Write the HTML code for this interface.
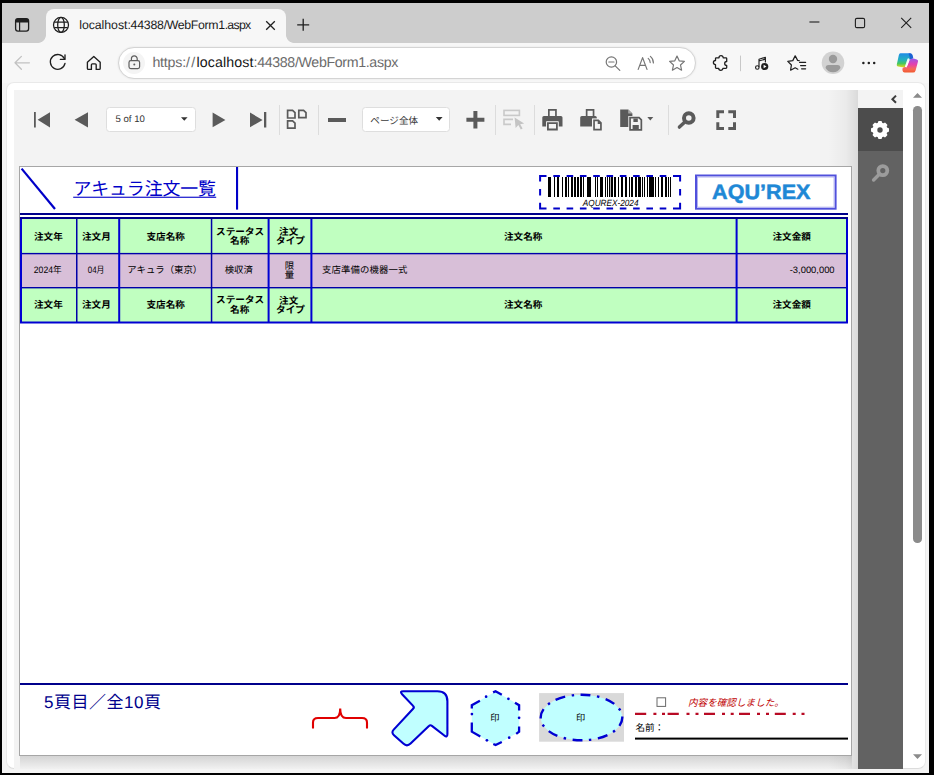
<!DOCTYPE html>
<html lang="ja"><head><meta charset="utf-8"><title>localhost:44388/WebForm1.aspx</title>
<style>

*{box-sizing:border-box}
html,body{margin:0;padding:0}
body{width:934px;height:775px;background:#000;position:relative;overflow:hidden;font-family:"Liberation Sans",sans-serif;color:#1b1b1b;text-rendering:geometricPrecision;-webkit-font-smoothing:antialiased}
.abs{position:absolute}
svg{position:absolute;overflow:visible}
#win{left:2px;top:3px;width:927px;height:770px;background:#f4f4f4}
#tabstrip{left:2px;top:3px;width:927px;height:40px;background:#cdcdcd}
#tab{left:46px;top:9px;width:240px;height:34px;background:#f7f7f7;border-radius:8px 8px 0 0}
#tab:before,#tab:after{content:"";position:absolute;bottom:0;width:8px;height:8px}
#tab:before{left:-8px;background:radial-gradient(circle at 0 0,rgba(247,247,247,0) 7.5px,#f7f7f7 8.2px)}
#tab:after{right:-8px;background:radial-gradient(circle at 100% 0,rgba(247,247,247,0) 7.5px,#f7f7f7 8.2px)}
#tabtitle{left:79.2px;top:17.8px;font-size:12.3px;line-height:15px;white-space:nowrap;color:#1a1a1a}
#toolbar{left:2px;top:43px;width:927px;height:40px;background:#f7f7f7}
#pill{left:118px;top:47px;width:578px;height:32px;background:#fff;border:1px solid #d4d4d4;border-radius:16px;box-shadow:0 0 2px rgba(0,0,0,.10)}
#lockbg{left:123px;top:52px;width:22px;height:22px;border-radius:11px;background:#f4f4f4}
#url{left:152.4px;top:55.4px;font-size:14.2px;line-height:17px;white-space:nowrap;color:#6b6b6b}
#url .k{color:#141414}
#content{left:6px;top:82px;width:920px;height:687px;background:#fff;border-radius:8px;border:1px solid #e9e9e9;border-bottom-color:#dcdcdc}
#viewer{left:14px;top:90px;width:889px;height:679px;background:#f3f3f3}
#pshadow{left:20px;top:755px;width:832px;height:14px;background:linear-gradient(#d2d2d2,#f1f1f1)}
#sshadow{left:828px;top:90px;width:30px;height:679px;background:linear-gradient(90deg,rgba(0,0,0,0),rgba(0,0,0,.035) 60%,rgba(0,0,0,.10))}
#side{left:858px;top:90px;width:45px;height:679px;background:#626262}
#sidetop{left:858px;top:90px;width:45px;height:18px;background:#f3f3f3}
#sideact{left:858px;top:108px;width:45px;height:42.5px;background:#4c4c4c}
#thumb{left:913.2px;top:106px;width:8.6px;height:436.6px;border-radius:4.3px;background:#8b8b8b}
.dd{height:25px;top:107px;background:#fff;border:1px solid #dedede;border-radius:3.5px}
.sep{top:104.5px;width:1px;height:30.5px;background:#dcdcdc}
#pgtxt{left:115.6px;top:114px;font-size:9.6px;line-height:11px;letter-spacing:-0.023px;color:#333;white-space:nowrap}
.jt{font-family:"Liberation Sans","Noto Sans CJK JP",sans-serif}
.hd{font-family:"Liberation Sans","Noto Sans CJK JP",sans-serif;font-size:9.6px;font-weight:700;fill:#000;text-anchor:middle}
.dt{font-family:"Liberation Sans","Noto Sans CJK JP",sans-serif;font-size:9.4px;fill:#000}

</style></head>
<body>

<div id="win" class="abs"></div>
<div id="tabstrip" class="abs"></div>
<div id="tab" class="abs"></div>
<div id="tabtitle" class="abs"><span style="letter-spacing:-0.039px">localhost</span><span style="letter-spacing:-0.220px">:44388</span><span style="letter-spacing:-0.336px">/WebForm1</span><span style="letter-spacing:-0.700px">.aspx</span></div>
<div id="toolbar" class="abs"></div>
<div id="pill" class="abs"></div>
<div id="lockbg" class="abs"></div>
<div id="url" class="abs"><span style="letter-spacing:-0.188px">https:</span><span style="letter-spacing:1.255px">//</span><span class="k" style="letter-spacing:0.128px">localhost</span><span style="letter-spacing:-0.334px">:44388/WebForm1.aspx</span></div>
<div id="content" class="abs"></div>
<div id="viewer" class="abs"></div>
<div id="pshadow" class="abs"></div>
<div id="sshadow" class="abs"></div>
<div id="side" class="abs"></div>
<div id="sidetop" class="abs"></div>
<div id="sideact" class="abs"></div>
<div id="thumb" class="abs"></div>
<div class="abs dd" style="left:106px;width:89.6px"></div>
<div class="abs dd" style="left:361.8px;width:88.6px"></div>
<div id="pgtxt" class="abs">5 of 10</div>
<div class="abs sep" style="left:279px"></div>
<div class="abs sep" style="left:318px"></div>
<div class="abs sep" style="left:495px"></div>
<div class="abs sep" style="left:534px"></div>
<div class="abs sep" style="left:668px"></div>
<svg style="left:0;top:0" width="934" height="775" viewBox="0 0 934 775">

<!-- tab actions -->
<rect x="15.6" y="18.6" width="13" height="12.6" rx="2.4" fill="none" stroke="#1f1f1f" stroke-width="1.3"/>
<path d="M15.6 22.4v-1.4q0-2.4 2.4-2.4h8.200000000000001q2.4 0 2.4 2.4v1.4z" fill="#1f1f1f"/>
<path d="M19.6 22v9" stroke="#1f1f1f" stroke-width="1.2"/>
<!-- globe -->
<g fill="none" stroke="#1f1f1f" stroke-width="1.25">
 <circle cx="61" cy="24.9" r="7.5"/>
 <ellipse cx="61" cy="24.9" rx="3.3" ry="7.5"/>
 <path d="M54.2 22.2h13.6M54.2 27.6h13.6"/>
</g>
<!-- tab close, new tab -->
<path d="M266.2 21.2l8.6 8.6M274.8 21.2l-8.6 8.6" stroke="#1f1f1f" stroke-width="1.3" fill="none"/>
<path d="M297.2 24.8h12M303.2 18.8v12" stroke="#1f1f1f" stroke-width="1.3" fill="none"/>
<!-- window controls -->
<path d="M809.4 22h10" stroke="#1f1f1f" stroke-width="1.1"/>
<rect x="855.4" y="18.4" width="9.2" height="9.2" rx="1.4" fill="none" stroke="#1f1f1f" stroke-width="1.1"/>
<path d="M901.2 17.9l10 10M911.2 17.9l-10 10" stroke="#1f1f1f" stroke-width="1.1"/>
<!-- back (disabled) -->
<path d="M15 62.8h14.4M21.4 56.4l-6.4 6.4 6.4 6.4" fill="none" stroke="#c2c2c2" stroke-width="1.3" stroke-linecap="round" stroke-linejoin="round"/>
<!-- refresh -->
<path d="M64.4 58.6A7.4 7.4 0 1 0 65 63.4" fill="none" stroke="#1f1f1f" stroke-width="1.35" stroke-linecap="round"/>
<path d="M65 54.8v4.6h-4.6" fill="none" stroke="#1f1f1f" stroke-width="1.35" stroke-linecap="round" stroke-linejoin="round"/>
<!-- home -->
<path d="M87.4 62.2l6.4-5.8 6.400000000000006 5.8v6.2q0 1-1 1h-3v-4.6q0-1-1-1h-2.8q-1 0-1 1v4.6h-3q-1 0-1-1z" fill="none" stroke="#1f1f1f" stroke-width="1.35" stroke-linejoin="round"/>
<!-- lock -->
<g fill="none" stroke="#5e5e5e" stroke-width="1.2">
 <rect x="129" y="60.6" width="10.6" height="8" rx="1.8"/>
 <path d="M131.4 60.4v-1.6a2.9 2.9 0 0 1 5.8 0v1.6"/>
</g>
<circle cx="134.3" cy="64.6" r="1" fill="#5e5e5e"/>
<!-- zoom out -->
<g fill="none" stroke="#767676" stroke-width="1.2" stroke-linecap="round">
 <circle cx="611.4" cy="62" r="5.2"/>
 <path d="M615.2 65.8l4.6 4.6M608.8 62h5.2"/>
</g>
<!-- read aloud -->
<g fill="none" stroke="#767676" stroke-width="1.2" stroke-linecap="round" stroke-linejoin="round">
 <path d="M638.2 69.4l4.4-11.8 4.4 11.8M639.8 65.4h5.6"/>
 <path d="M648.2 58.4q2 1.6 2 4.200000000000003M650.4 56.4q3 2.4 3 6.6"/>
</g>
<!-- star -->
<path d="M677 56l2.2 4.8 5.2.6-3.9 3.6 1.1 5.2-4.6-2.7-4.6 2.7 1.1-5.2-3.9-3.6 5.2-.6z" fill="none" stroke="#767676" stroke-width="1.2" stroke-linejoin="round"/>
<!-- extensions puzzle -->
<path d="M716.2 57.8H719a2.1 2.1 0 1 1 4.2 0H726q.7 0 .7.7V61.5a2 2 0 1 0 0 4V67.6q0 .7-.7.7H722.9a2.1 2.1 0 1 1-4.2 0H716.2q-.7 0-.7-.7V64.7a2.1 2.1 0 1 1 0-4.2V58.5q0-.7.7-.7z" fill="none" stroke="#1f1f1f" stroke-width="1.3" stroke-linejoin="round"/>
<path d="M740.5 55.6v15.6" stroke="#c8c8c8" stroke-width="1"/>
<!-- music / media -->
<g fill="none" stroke="#1f1f1f" stroke-width="1.15" stroke-linecap="round" stroke-linejoin="round">
 <path d="M759 66.6v-7.4l6.4-1.900000000000002v4.6M759 61l6.4-1.9"/>
 <circle cx="757.3" cy="67.5" r="1.75"/>
</g>
<circle cx="764.7" cy="66.5" r="3.6" fill="#1f1f1f"/>
<path d="M763.6 64.7l2.9 1.8-2.9 1.8z" fill="#fff"/>
<!-- favorites -->
<g fill="none" stroke="#1f1f1f" stroke-width="1.25" stroke-linecap="round" stroke-linejoin="round">
 <path d="M799.2 60.6l-1.6-.2-2.4-4.6-2.4 4.8-5 .8 3.6 3.6-.8 5.2 4.6-2.4 2.6 1.4"/>
 <path d="M799.6 62.4h6M800.6 65.6h5M801.6 68.8h4"/>
</g>
<!-- profile -->
<circle cx="833" cy="62.8" r="11.3" fill="#d2d2d2"/>
<circle cx="833" cy="59" r="4.2" fill="#9a9a9a"/>
<path d="M825.6 68q0-3 3-3h8.8q3 0 3 3q-2.4 4.2-7.4 4.2t-7.4-4.2z" fill="#9a9a9a"/>
<!-- menu dots -->
<circle cx="863.4" cy="63" r="1.25" fill="#1f1f1f"/><circle cx="868.8" cy="63" r="1.25" fill="#1f1f1f"/><circle cx="874.2" cy="63" r="1.25" fill="#1f1f1f"/>


<defs>
 <linearGradient id="cpA" x1="0" y1="0" x2="0" y2="1"><stop offset="0" stop-color="#1d8be8"/><stop offset=".45" stop-color="#22b0c0"/><stop offset=".72" stop-color="#44c860"/><stop offset="1" stop-color="#f0d818"/></linearGradient>
 <linearGradient id="cpB" x1="0" y1="0" x2="0" y2="1"><stop offset="0" stop-color="#9a58e8"/><stop offset=".4" stop-color="#e33fb0"/><stop offset=".75" stop-color="#f76a58"/><stop offset="1" stop-color="#f0582c"/></linearGradient>
</defs>
<path d="M900.4 53.2h9.6q1.6 0 2.2 1.6l.8 2.4q.4 1.2-1 1.6l-2.2.6q-1.4.4-2 2l-1.800000000000068 4.6q-.6 1.6-2.2 1.4l-5.6-.8q-1.8-.2-1.4-2l2-9.4q.4-2 1.6-2z" fill="url(#cpA)"/>
<path d="M908.6 53.2h1.6q1.6 0 2.200000000000045 1.6l.8 2.4q.4 1.2-1 1.6l-2 .6z" fill="#1a4fd0" opacity=".75"/>
<path d="M913.6 58.6l3.2.8q1.6.4 1.2 2l-2.4 9q-.6 2.2-2.6 2.2h-8.4q-1.8 0-2-1.8l-.2-1.600000000000003q-.2-1.4 1.2-1.8l2.2-.6q1.4-.4 2-2l1.6-4.4q.6-1.6 2.2-1.6z" fill="url(#cpB)"/>
<path d="M908.4 59.4l-2.4 7" stroke="#fff" stroke-width="2" stroke-linecap="round" opacity=".92"/>


<path d="M34 112h1.8v15.6h-1.8z M50 112.2L37.6 119.80000000000001L50 127.4Z" fill="#5a5a5a"/>
<path d="M88 112.2L74.6 119.80000000000001L88 127.4Z" fill="#5a5a5a"/>
<path d="M212.6 112.6L225.4 119.9L212.6 127.2Z" fill="#5a5a5a"/>
<path d="M250 112.6L262.6 119.9L250 127.2Z M264 112h2.3v15.6h-2.3z" fill="#5a5a5a"/>
<g fill="none" stroke="#5a5a5a" stroke-width="1.7" stroke-linejoin="miter">
 <path d="M287.6 110.4h5l2.4 2.2v5.4h-7.4z"/>
 <path d="M298.8 110.4h4.8l2.4 2.2v5h-7.2z"/>
 <path d="M287.6 120.8h5l2.4 2.2v5.2h-7.4z"/>
</g>
<rect x="328" y="118" width="18" height="4" fill="#5a5a5a"/>
<path d="M466.4 117.8h7v-6.8h4v6.8h7v4h-7v6.8h-4v-6.8h-7z" fill="#5a5a5a"/>
<g fill="none" stroke="#c9c9c9" stroke-width="1.6">
 <rect x="504" y="110.4" width="15.4" height="5"/>
 <path d="M513 119.4h-9v5h7"/>
</g>
<path d="M514.6 117.6l9.6 6-4 .6 2.4 4.4-1.8 1-2.4-4.5-2.8 2.8z" fill="#c4c4c4"/>
<!-- print -->
<g fill="#5a5a5a">
 <path d="M548 109h8.8v7.2h-1.7v-5.5h-5.4v5.5H548z"/>
 <path d="M543.9 115.9h17q1.6 0 1.6 1.6v9h-4v-5h-12.2v5h-4v-9q0-1.600000000000001 1.6-1.600000000000001z"/>
 <path d="M546.2 121.4h12.4v9.8h-12.4z" fill="#f3f3f3"/><path d="M547 122.2h10.800000000000068v8.2H547zM548.8 124v4.6h7.2v-4.6z" fill-rule="evenodd"/>
</g>
<!-- print page -->
<g fill="#5a5a5a">
 <path d="M585.8 109h8.6v7.2h-1.7v-5.5h-5.2v5.5h-1.7z"/>
 <path d="M581.8 115.9h13.4q1.6 0 1.6 1.6v1h-4.8v8h-11.8v-9q0-1.600000000000001 1.6-1.600000000000001z"/>
 <path d="M592.3 118.7h6.7l3.7 3.5v9h-10.4z" fill="#f3f3f3"/><path d="M593.2 119.6h5.400000000000034l3.2 3v7.8h-8.6zM594.9 121.3v7.4h5.2v-4.8h-2.4v-2.6z" fill-rule="evenodd"/>
</g>
<!-- export -->
<g fill="#5a5a5a">
 <path d="M620.2 109.6h8l4.2 4v13.4h-12.2z"/>
 <path d="M628.2 109.6l4.2 4h-4.2z" fill="#a8a8a8"/>
 <path d="M628.3 115.9h11.600000000000023l3.2 3v12.6h-14.8z" fill="#f3f3f3"/>
 <path d="M629.2 116.8h10.2l2.8 2.6v11.400000000000006h-13zM630.9 118.5v10.4h9.6v-8.7l-1.8-1.7z" fill-rule="evenodd"/>
 <path d="M633.4 118.5h4.4v3.6h-4.4zM632.6 125h6.2v3.9h-6.2z"/>
 <path d="M647.3 117.1h6l-3 3.3z"/>
</g>
<!-- search -->
<g fill="none" stroke="#5a5a5a">
 <circle cx="688.8" cy="118" r="4.8" stroke-width="4"/>
 <path d="M684.6 122.3l-5.2 4.8" stroke-width="3.4" stroke-linecap="round"/>
</g>
<!-- fullscreen -->
<path d="M717.8 118v-6.2h6.2M728.3 111.8h6.2v6.2M734.5 122.3v6.2h-6.2M724 128.5h-6.2v-6.2" fill="none" stroke="#5a5a5a" stroke-width="3"/>
<!-- dropdown carets -->
<path d="M181 117.2h6.6l-3.3 3.6z M435.8 117h6.8l-3.4 3.7z" fill="#333"/>
<text class="jt" x="370.3" y="124.3" font-size="9.6" fill="#3a3a3a">ページ全体</text>


<path d="M896 95.6l-3.6 3.6 3.6 3.6" fill="none" stroke="#3c3c3c" stroke-width="2"/>
<path d="M878.44 123.49L878.91 121.87L881.09 121.87L881.56 123.49L883.50 124.29L884.97 123.48L886.52 125.03L885.71 126.50L886.51 128.44L888.13 128.91L888.13 131.09L886.51 131.56L885.71 133.50L886.52 134.97L884.97 136.52L883.50 135.71L881.56 136.51L881.09 138.13L878.91 138.13L878.44 136.51L876.50 135.71L875.03 136.52L873.48 134.97L874.29 133.50L873.49 131.56L871.87 131.09L871.87 128.91L873.49 128.44L874.29 126.50L873.48 125.03L875.03 123.48L876.50 124.29Z" fill="#fff" stroke="#fff" stroke-width="1.7" stroke-linejoin="round"/>
<circle cx="880" cy="130" r="2.7" fill="#4c4c4c"/>
<circle cx="880" cy="130" r="3.1" fill="none" stroke="#fff" stroke-width="0"/>
<g fill="none" stroke="#9c9c9c">
 <circle cx="882.8" cy="170.6" r="4.5" stroke-width="3.8"/>
 <path d="M878.8 174.8l-5.2 5.2" stroke-width="3.4" stroke-linecap="round"/>
</g>
<path d="M913 97.8l4.5-4.8 4.5 4.8z M913 754.2h9l-4.5 4.8z" fill="#8b8b8b"/>

<rect x="19.5" y="166.5" width="832" height="589" fill="#fff" stroke="#a6a6a6" stroke-width="1"/><line x1="21.6" y1="168.6" x2="55" y2="209" stroke="#0000c8" stroke-width="2.2"/><text class="jt" x="73.4" y="194.6" font-size="17.9" fill="#0000c8" textLength="142.6" lengthAdjust="spacing">アキュラ注文一覧</text><rect x="73.2" y="196.7" width="143" height="1.1" fill="#0000c8"/><rect x="236" y="167" width="2.1" height="42.6" fill="#0000c8"/><path d="M539.1 175h7.4v2h-7.4z M539.1 207.6h7.4v2h-7.4z M553.3 175h6.6v2h-6.6z M553.3 207.6h6.6v2h-6.6z M566.6 175h6.6v2h-6.6z M566.6 207.6h6.6v2h-6.6z M579.9 175h6.6v2h-6.6z M579.9 207.6h6.6v2h-6.6z M593.2 175h6.6v2h-6.6z M593.2 207.6h6.6v2h-6.6z M606.5 175h6.6v2h-6.6z M606.5 207.6h6.6v2h-6.6z M619.8 175h6.6v2h-6.6z M619.8 207.6h6.6v2h-6.6z M633.1 175h6.6v2h-6.6z M633.1 207.6h6.6v2h-6.6z M646.4 175h6.6v2h-6.6z M646.4 207.6h6.6v2h-6.6z M659.7 175h6.6v2h-6.6z M659.7 207.6h6.6v2h-6.6z M673 175h8.1v2h-8.1z M673 207.6h8.1v2h-8.1z M539.1 175h2v6.4h-2z M539.1 189h2v6.6h-2z M539.1 202.8h2v6.8h-2z M679.1 175h2v6.4h-2z M679.1 189h2v6.6h-2z M679.1 202.8h2v6.8h-2z " fill="#0000c8"/><path d="M548 177h3v20h-3zM554 177h1v20h-1zM557 177h2v20h-2zM562 177h1v20h-1zM565 177h2v20h-2zM568 177h1v20h-1zM571 177h2v20h-2zM574 177h2v20h-2zM577 177h2v20h-2zM580 177h2v20h-2zM583 177h1v20h-1zM587 177h4v20h-4zM595 177h1v20h-1zM597 177h1v20h-1zM600 177h3v20h-3zM605 177h1v20h-1zM607 177h1v20h-1zM609 177h1.3v20h-1.3zM611 177h2v20h-2zM614 177h2v20h-2zM618 177h1v20h-1zM621 177h2v20h-2zM625 177h2v20h-2zM629 177h1v20h-1zM631 177h2v20h-2zM635 177h2v20h-2zM638 177h3v20h-3zM642 177h1v20h-1zM644 177h1v20h-1zM647 177h1v20h-1zM649 177h5v20h-5zM655 177h1v20h-1zM658 177h1v20h-1zM661 177h2v20h-2zM665 177h2v20h-2zM668 177h1v20h-1zM670 177h1v20h-1z" fill="#000"/><text x="582.8" y="205.6" font-family="Liberation Sans, sans-serif" font-style="italic" font-size="9" fill="#000" textLength="55.7" lengthAdjust="spacingAndGlyphs">AQUREX-2024</text><rect x="696" y="175.5" width="139.6" height="33.2" fill="#fff" stroke="#5050dc" stroke-width="2"/><rect x="697.5" y="177" width="136.6" height="30.2" fill="none" stroke="#b0b0f0" stroke-width="1"/><text x="761.3" y="199.1" font-family="Liberation Sans, sans-serif" font-weight="700" font-size="20.8" text-anchor="middle" textLength="98.4" lengthAdjust="spacingAndGlyphs" fill="#1e88d6" stroke="#1e88d6" stroke-width="0.5">AQU’REX</text><rect x="20" y="213" width="828" height="2" fill="#00008b"/><rect x="21" y="218" width="826" height="104.5" fill="#c0ffc0"/><rect x="21" y="253.5" width="826" height="34" fill="#d8bfd8"/><rect x="21" y="252.9" width="826" height="1.4" fill="#0000a8"/><rect x="21" y="287" width="826" height="1.4" fill="#0000a8"/><rect x="76" y="218" width="1.5" height="104.5" fill="#0000a8"/><rect x="118.2" y="218" width="2" height="104.5" fill="#0000d2"/><rect x="210.8" y="218" width="1.5" height="104.5" fill="#0000a8"/><rect x="267.6" y="218" width="2" height="104.5" fill="#0000d2"/><rect x="310.4" y="218" width="2" height="104.5" fill="#0000d2"/><rect x="735.6" y="218" width="2" height="104.5" fill="#0000d2"/><rect x="21" y="218" width="826" height="104.5" fill="none" stroke="#0000d2" stroke-width="2"/><rect x="20" y="217" width="828" height="2" fill="#00008b"/>
<text class="hd" x="48.4" y="239.7">注文年</text>
<text class="hd" x="96.4" y="239.7">注文月</text>
<text class="hd" x="165.7" y="239.7">支店名称</text>
<text class="hd" x="523.2" y="239.7">注文名称</text>
<text class="hd" x="791.7" y="239.7">注文金額</text>
<text class="hd" x="240.1" y="234.7">ステータス</text>
<text class="hd" x="239.7" y="244.2">名称</text>
<text class="hd" x="288.7" y="235.2">注文</text>
<text class="hd" x="290.5" y="244.2">タイプ</text>
<text class="hd" x="48.4" y="308.3">注文年</text>
<text class="hd" x="96.4" y="308.3">注文月</text>
<text class="hd" x="165.7" y="308.3">支店名称</text>
<text class="hd" x="523.2" y="308.3">注文名称</text>
<text class="hd" x="791.7" y="308.3">注文金額</text>
<text class="hd" x="240.1" y="303.3">ステータス</text>
<text class="hd" x="239.7" y="312.8">名称</text>
<text class="hd" x="288.7" y="303.8">注文</text>
<text class="hd" x="290.5" y="312.8">タイプ</text>
<text class="dt" x="33.8" y="273" textLength="27.9" lengthAdjust="spacingAndGlyphs">2024年</text>
<text class="dt" x="87.8" y="272.8" textLength="16.7" lengthAdjust="spacingAndGlyphs">04月</text>
<text class="dt" x="127.2" y="273" font-size="9.2">アキュラ（東京）</text>
<text class="dt" x="224.7" y="273.2">検収済</text>
<text class="dt" x="289.4" y="268.9" font-size="9" text-anchor="middle">限</text>
<text class="dt" x="289.4" y="278.4" font-size="9" text-anchor="middle">量</text>
<text class="dt" x="321.9" y="273.2" textLength="85.4" lengthAdjust="spacing">支店準備の機器一式</text>
<text class="dt" x="834.6" y="272.8" text-anchor="end">-3,000,000</text>
<rect x="20" y="683" width="828" height="2" fill="#00008b"/><text class="jt" x="44" y="708.4" font-size="17" fill="#00008b" textLength="117" lengthAdjust="spacing">5頁目／全10頁</text><path d="M313 728.6 V722.5 Q313 718 318 718 H334.5 Q340.2 718 340.2 708.4 Q340.2 718 346 718 H362 Q367 718 367 722.5 V728.6" fill="none" stroke="#e00000" stroke-width="2.1" stroke-linecap="butt"/><path d="M402.1 694.2 Q399.3 691.3 403.3 691.3 L437.4 691.3 Q447.4 691.3 447.4 701.3 L447.4 734.0 Q447.4 738.0 444.3 735.5 L431.9 725.8 Q430.3 724.6 428.9 726.0 L410.6 743.5 Q407.0 747.0 403.3 743.6 L394.0 735.2 Q391.0 732.5 393.7 729.6 L413.1 708.8 Q414.5 707.3 413.1 705.9 Z" fill="#c0ffff" stroke="#0000d2" stroke-width="2.1" stroke-linejoin="round"/><path d="M495.6 691.4 L519.2 705 L519.2 731.8 L495.6 745 L471.8 731.8 L471.8 705 Z" fill="#c0ffff"/><path d="M493.1 692.4 L495.6 691.2 L501.8 694.7 M515 702.7 L519.1 705.2 L519.1 710.4 M519.1 726.5 L519.1 731.7 L516.2 733.9 M501.8 742.0 L495.6 745.0 L493.3 744.0 M480.3 736.6 L471.8 731.7 L471.8 722.4 M471.8 708.6 L471.8 705.2 L479.9 700.7" fill="none" stroke="#0000d2" stroke-width="2.3" stroke-linejoin="miter"/><circle cx="508.4" cy="698.8" r="1.35" fill="#0000d2"/><circle cx="519.1" cy="717.8" r="1.35" fill="#0000d2"/><circle cx="509.2" cy="737.7" r="1.35" fill="#0000d2"/><circle cx="486.9" cy="740.3" r="1.35" fill="#0000d2"/><circle cx="471.9" cy="714.1" r="1.35" fill="#0000d2"/><circle cx="486.1" cy="696.7" r="1.35" fill="#0000d2"/><text class="jt" x="494.8" y="720.8" font-size="9.2" fill="#000" text-anchor="middle">印</text><rect x="539.1" y="693.1" width="84.9" height="48.6" fill="#d9d9d9"/><ellipse cx="581.5" cy="717.5" rx="40.8" ry="22.8" fill="#c0ffff" stroke="#0000d2" stroke-width="2.4" pathLength="203.2" stroke-dasharray="10 6.5 2.4 6.5" stroke-dashoffset="1"/><text class="jt" x="580.5" y="720.8" font-size="9.2" fill="#000" text-anchor="middle">印</text><rect x="657" y="697.8" width="8.6" height="8.6" fill="#fff" stroke="#6a6a6a" stroke-width="1"/><text class="jt" x="688" y="705.6" font-size="9.6" font-style="italic" fill="#c00000">内容を確認しました。</text><path d="M635 712.7h11.2v2.2h-11.2zM653.4 712.7h3v2.2h-3zM662 712.7h3v2.2h-3zM667.6 712.7h11.2v2.2h-11.2zM686.5 712.7h3v2.2h-3zM695.5 712.7h3v2.2h-3zM704 712.7h11v2.2h-11zM722 712.7h3v2.2h-3zM730.7 712.7h3v2.2h-3zM739 712.7h11v2.2h-11zM757 712.7h3v2.2h-3zM766 712.7h3v2.2h-3zM774.8 712.7h11v2.2h-11zM792.7 712.7h3v2.2h-3zM801.5 712.7h3v2.2h-3z" fill="#b80a24"/><text class="jt" x="635.4" y="731" font-size="9.6" fill="#000">名前：</text><rect x="635" y="737.6" width="213" height="2" fill="#000"/>
</svg>

</body></html>
